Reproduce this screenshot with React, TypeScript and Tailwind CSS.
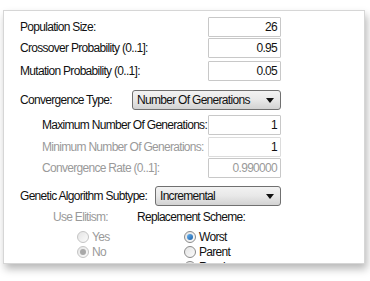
import React from 'react'

const font = { fontFamily: '"Liberation Sans", Arial, sans-serif' }

function Field({ value, disabled, faint }: { value: string; disabled?: boolean; faint?: boolean }) {
  return (
    <div
      className={`w-[73px] h-[20px] bg-white border rounded-[1px] flex items-center justify-end pr-[3px] text-[12px] ${
        faint ? 'border-[#dcdcdc]' : 'border-[#c8c8c8]'
      } ${disabled ? 'text-[#9a9a9a]' : 'text-[#111]'}`}
    >
      {value}
    </div>
  )
}

function Dropdown({ value, width }: { value: string; width: string }) {
  return (
    <div
      className={`${width} h-[20px] rounded-[3px] border border-[#707070] bg-gradient-to-b from-[#f2f2f2] via-[#e8e8e8] to-[#d2d2d2] flex items-center pl-[4px] pr-[6px] text-[12px] text-[#111]`}
    >
      <span className="flex-1 whitespace-nowrap">{value}</span>
      <svg width="8" height="5" viewBox="0 0 8 5">
        <path d="M0 0h8L4 5z" fill="#111" />
      </svg>
    </div>
  )
}

function Radio({ checked, disabled }: { checked?: boolean; disabled?: boolean }) {
  const ring = disabled ? 'border-[#c4c4c4]' : 'border-[#8a8a8a]'
  const dot = disabled ? 'bg-[#a8a8a8]' : 'bg-gradient-to-br from-[#6ab4f0] to-[#1860a8]'
  return (
    <span
      className={`w-[12px] h-[12px] shrink-0 rounded-full border ${ring} bg-gradient-to-br from-[#e4e4e4] to-[#fbfbfb] flex items-center justify-center`}
    >
      {checked && <span className={`w-[6px] h-[6px] rounded-full ${dot}`} />}
    </span>
  )
}

function Row({ label, children, className, labelClass }: { label: string; children: React.ReactNode; className?: string; labelClass?: string }) {
  return (
    <div className={`flex items-center h-[20px] ${className ?? ''}`}>
      <div className={`flex-1 whitespace-nowrap text-[12px] ${labelClass ?? 'text-[#111]'}`}>{label}</div>
      {children}
    </div>
  )
}

export default function App() {
  return (
    <div className="w-[370px] h-[281px] bg-white pt-[10px] pl-[3px]" style={font}>
      <div className="w-[362px] h-[254px] border border-[#d6d6d6] bg-white overflow-hidden shadow-[2px_5px_8px_rgba(0,0,0,0.28)]">
        <div className="w-[277px] pl-[16px] tracking-[-0.7px]">
          <Row label="Population Size:" className="mt-[6px]">
            <Field value="26" />
          </Row>
          <Row label="Crossover Probability (0..1]:" className="mt-[1px]">
            <Field value="0.95" />
          </Row>
          <Row label="Mutation Probability (0..1]:" className="mt-[3px]">
            <Field value="0.05" />
          </Row>

          <div className="flex items-center h-[20px] mt-[9px]">
            <div className="w-[112px] whitespace-nowrap text-[12px] text-[#111]">Convergence Type:</div>
            <Dropdown value="Number Of Generations" width="w-[149px]" />
          </div>

          <div className="pl-[22px]">
            <Row label="Maximum Number Of Generations:" className="mt-[5px]">
              <Field value="1" />
            </Row>
            <Row label="Minimum Number Of Generations:" className="mt-[2px]" labelClass="text-[#9a9a9a]">
              <Field value="1" faint />
            </Row>
            <Row label="Convergence Rate (0..1]:" className="mt-[1px]" labelClass="text-[#9a9a9a]">
              <Field value="0.990000" disabled />
            </Row>
          </div>

          <div className="flex items-center h-[20px] mt-[8px]">
            <div className="w-[135px] whitespace-nowrap text-[12px] text-[#111]">Genetic Algorithm Subtype:</div>
            <Dropdown value="Incremental" width="w-[126px]" />
          </div>

          <div className="flex mt-[4px] text-[12px] whitespace-nowrap">
            <div className="w-[117px] flex flex-col pl-[33px]">
              <div className="text-[#9a9a9a] leading-[14px]">Use Elitism:</div>
              <div className="flex flex-col mt-[6px] pl-[24px] gap-[1px]">
                <div className="flex items-center gap-[3px] h-[14px] text-[#9a9a9a]">
                  <Radio disabled />
                  <span>Yes</span>
                </div>
                <div className="flex items-center gap-[3px] h-[14px] text-[#9a9a9a]">
                  <Radio checked disabled />
                  <span>No</span>
                </div>
              </div>
            </div>
            <div className="flex flex-col">
              <div className="text-[#111] leading-[14px]">Replacement Scheme:</div>
              <div className="flex flex-col mt-[6px] pl-[47px] gap-[1px]">
                <div className="flex items-center gap-[3px] h-[14px] text-[#111]">
                  <Radio checked />
                  <span>Worst</span>
                </div>
                <div className="flex items-center gap-[3px] h-[14px] text-[#111]">
                  <Radio />
                  <span>Parent</span>
                </div>
                <div className="flex items-center gap-[3px] h-[14px] text-[#111]">
                  <Radio />
                  <span>Random</span>
                </div>
              </div>
            </div>
          </div>
        </div>
      </div>
    </div>
  )
}
